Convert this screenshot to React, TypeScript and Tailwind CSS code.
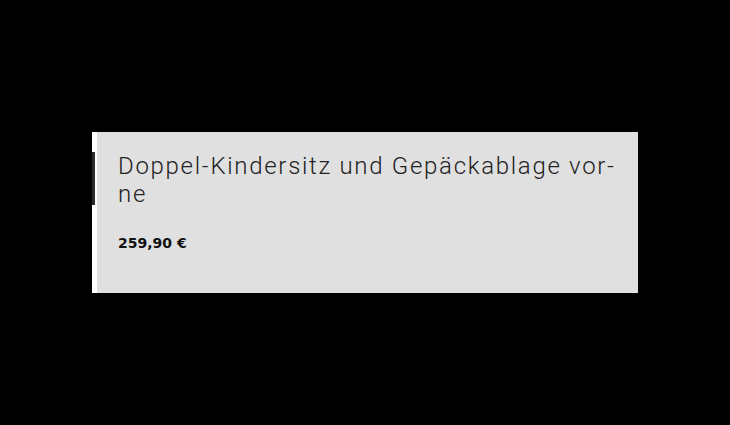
export default function App() {
  return (
    <div className="h-[425px] w-[730px] bg-black pt-[132px] pl-[92px]" style={{ fontFamily: "Roboto, 'Noto Sans', sans-serif" }}>
      <div className="flex h-[161px] w-[546px]">
        <div className="relative w-[5px] bg-white">
          <div className="absolute left-0 top-[20px] h-[53px] w-[3px] bg-[#2a2a2a]" />
        </div>
        <div className="flex-1 bg-[#e0e0e0] pl-[21px] pt-[20px]">
          <h2 className="text-[24px] font-light leading-[28px] tracking-[1.7px] text-[#222]">
            Doppel-Kindersitz und Gepäckablage vor-
            <br />
            ne
          </h2>
          <p className="mt-[25px] font-['DejaVu_Sans',sans-serif] text-[14px] font-bold leading-[20px] text-[#111]">259,90 €</p>
        </div>
      </div>
    </div>
  );
}
